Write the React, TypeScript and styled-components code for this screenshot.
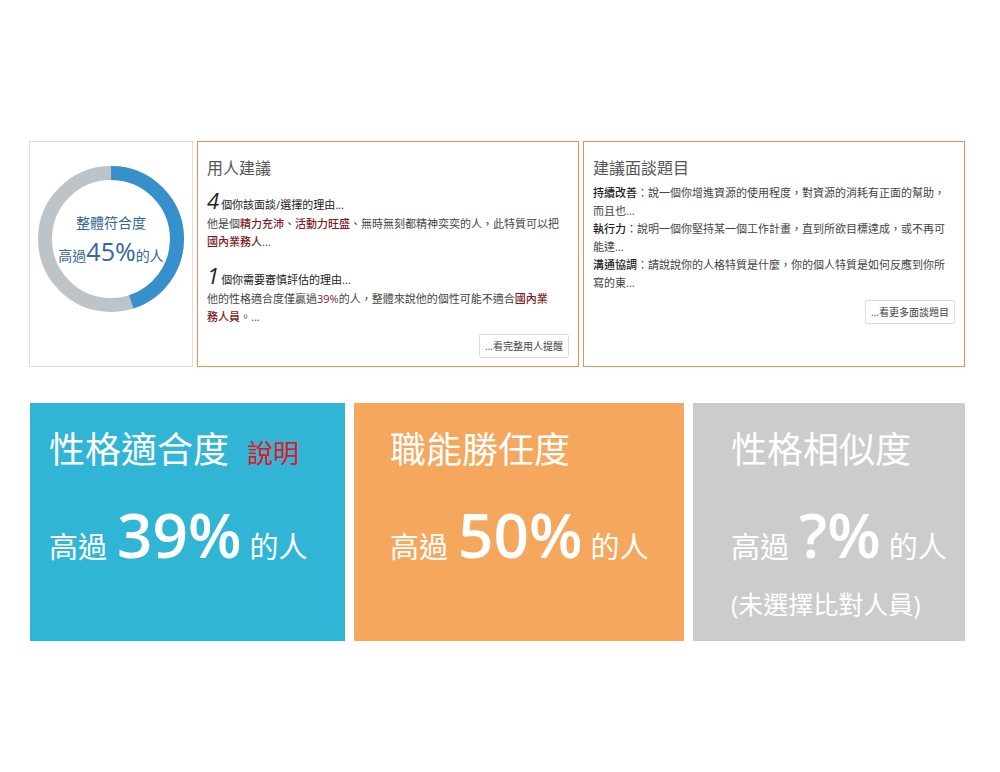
import React from 'react';
import styled, { createGlobalStyle } from 'styled-components';

const GlobalStyle = createGlobalStyle`
  * { box-sizing: border-box; }
  body {
    margin: 0;
    background: #fff;
    color: #444;
    font-family: 'Open Sans', 'Noto Sans CJK TC', sans-serif;
  }
  h2, p { margin: 0; font-weight: 400; }
`;

const Page = styled.main`
  padding: 141px 35px 131px 29px;
`;

const Summary = styled.section`
  display: grid;
  grid-template-columns: 164fr 382fr 382fr;
  gap: 4px;
`;

const ScorePanel = styled.div`
  display: grid;
  justify-content: center;
  align-content: start;
  padding-top: 24px;
  border: 1px solid #ddd;
`;

const Ring = styled.svg`
  grid-area: 1 / 1;
  width: 146px;
  height: 146px;
`;

const RingLabel = styled.div`
  grid-area: 1 / 1;
  align-self: center;
  justify-self: center;
  color: #336699;
  font-size: 14px;
  text-align: center;
  white-space: nowrap;
`;

const RingTitle = styled.p`
  line-height: 24px;
`;

const RingValue = styled.p`
  line-height: 16px;
`;

const RingNumber = styled.span`
  font-size: 25px;
  line-height: 32px;
`;

const AdvicePanel = styled.article`
  display: flex;
  flex-direction: column;
  padding: 14px 9px 8px;
  border: 1px solid #f0904a;
`;

const PanelTitle = styled.h2`
  font-size: 16px;
  line-height: 24px;
  color: #555;
`;

const Reason = styled.section<{ $gap: number }>`
  margin-top: ${(p) => p.$gap}px;
`;

const ReasonTitle = styled.p`
  margin-bottom: 2px;
  font-size: 11px;
  line-height: 16px;
  color: #222;
`;

const ReasonCount = styled.em`
  margin-right: 2px;
  font-size: 22px;
  line-height: 24px;
`;

const BodyText = styled.p`
  font-size: 11px;
  line-height: 18px;
  white-space: nowrap;
`;

const Highlight = styled.span`
  color: #801c24;
  font-weight: 500;
`;

const Questions = styled.div`
  margin-top: 4px;
`;

const Topic = styled.span`
  color: #222;
  font-weight: 500;
`;

const MoreButton = styled.button`
  align-self: flex-end;
  height: 24px;
  margin-top: 8px;
  padding: 0 5px;
  border: 1px solid #ddd;
  border-radius: 2px;
  background: #fff;
  color: #444;
  font-family: inherit;
  font-size: 10px;
  line-height: 22px;
  white-space: nowrap;
`;

const Metrics = styled.section`
  display: grid;
  grid-template-columns: 315fr 330fr 272fr;
  gap: 9px;
  margin: 36px 0 0 1px;
`;

const MetricCard = styled.article<{ $color: string; $indent: number }>`
  padding: 23px 0 19px ${(p) => p.$indent}px;
  background: ${(p) => p.$color};
  color: #fff;
  white-space: nowrap;
`;

const MetricTitle = styled.h2`
  font-size: 36px;
  line-height: 48px;
`;

const HelpLink = styled.a`
  margin-left: 18px;
  color: #e8141c;
  font-size: 26px;
  line-height: 32px;
  text-decoration: none;
`;

const MetricValue = styled.p`
  margin-top: 24px;
  font-size: 29px;
  line-height: 32px;
`;

const MetricNumber = styled.strong`
  margin: 0 8px 0 10px;
  font-size: 62px;
  font-weight: 600;
  line-height: 72px;
`;

const MetricNote = styled.p`
  min-height: 36px;
  margin-top: 16px;
  font-size: 25px;
  line-height: 36px;
`;

type MetricProps = {
  title: string;
  value: string;
  color: string;
  indent: number;
  help?: string;
  note?: string;
};

function Metric({ title, value, color, indent, help, note }: MetricProps) {
  return (
    <MetricCard $color={color} $indent={indent}>
      <MetricTitle>
        {title}
        {help && <HelpLink href="#help">{help}</HelpLink>}
      </MetricTitle>
      <MetricValue>
        高過<MetricNumber>{value}</MetricNumber>的人
      </MetricValue>
      <MetricNote>{note}</MetricNote>
    </MetricCard>
  );
}

export default function App() {
  return (
    <>
      <GlobalStyle />
      <Page>
        <Summary>
          <ScorePanel>
            <Ring viewBox="0 0 146 146" aria-hidden="true">
              <circle cx="73" cy="73" r="66" fill="none" stroke="#bdc3c7" strokeWidth="14" />
              <circle
                cx="73"
                cy="73"
                r="66"
                fill="none"
                stroke="#3690cc"
                strokeWidth="14"
                pathLength={100}
                strokeDasharray="45 55"
                transform="rotate(-90 73 73)"
              />
            </Ring>
            <RingLabel>
              <RingTitle>整體符合度</RingTitle>
              <RingValue>
                高過<RingNumber>45%</RingNumber>的人
              </RingValue>
            </RingLabel>
          </ScorePanel>

          <AdvicePanel>
            <PanelTitle>用人建議</PanelTitle>
            <Reason $gap={8}>
              <ReasonTitle>
                <ReasonCount>4</ReasonCount>個你該面談/選擇的理由...
              </ReasonTitle>
              <BodyText>
                他是個<Highlight>精力充沛</Highlight>、<Highlight>活動力旺盛</Highlight>
                、無時無刻都精神奕奕的人，此特質可以把
                <br />
                <Highlight>國內業務人</Highlight>...
              </BodyText>
            </Reason>
            <Reason $gap={12}>
              <ReasonTitle>
                <ReasonCount>1</ReasonCount>個你需要審慎評估的理由...
              </ReasonTitle>
              <BodyText>
                他的性格適合度僅贏過<Highlight>39%</Highlight>的人，整體來說他的個性可能不適合
                <Highlight>國內業</Highlight>
                <br />
                <Highlight>務人員</Highlight>。...
              </BodyText>
            </Reason>
            <MoreButton type="button">...看完整用人提醒</MoreButton>
          </AdvicePanel>

          <AdvicePanel>
            <PanelTitle>建議面談題目</PanelTitle>
            <Questions>
              <BodyText>
                <Topic>持續改善</Topic>：說一個你增進資源的使用程度，對資源的消耗有正面的幫助，
                <br />
                而且也...
              </BodyText>
              <BodyText>
                <Topic>執行力</Topic>：說明一個你堅持某一個工作計畫，直到所欲目標達成，或不再可
                <br />
                能達...
              </BodyText>
              <BodyText>
                <Topic>溝通協調</Topic>：請說說你的人格特質是什麼，你的個人特質是如何反應到你所
                <br />
                寫的東...
              </BodyText>
            </Questions>
            <MoreButton type="button">...看更多面談題目</MoreButton>
          </AdvicePanel>
        </Summary>

        <Metrics>
          <Metric title="性格適合度" value="39%" color="#31b5d6" indent={19} help="說明" />
          <Metric title="職能勝任度" value="50%" color="#f5a85d" indent={36} />
          <Metric title="性格相似度" value="?%" color="#cccccc" indent={38} note="(未選擇比對人員)" />
        </Metrics>
      </Page>
    </>
  );
}
